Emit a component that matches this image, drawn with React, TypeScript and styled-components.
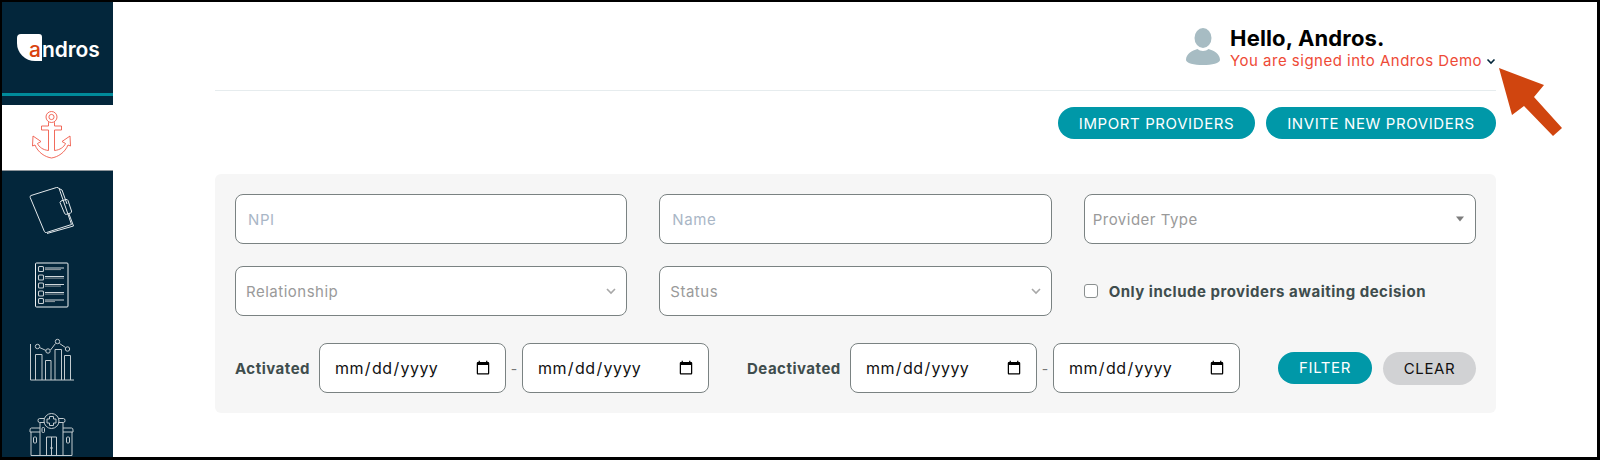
import React from "react";
import styled, { createGlobalStyle } from "styled-components";

const FONT = `Inter, "Noto Sans", "Liberation Sans", sans-serif`;

const GlobalStyle = createGlobalStyle`
  html, body {
    margin: 0;
    padding: 0;
    background: #fff;
    font-family: ${FONT};
  }
`;

// Black outline around the whole screenshot
const Frame = styled.div`
  position: relative;
  box-sizing: border-box;
  display: flex;
  width: 1600px;
  height: 460px;
  border: solid #000;
  border-width: 2px 3px 3px 2px;
  overflow: hidden;
  background: #fff;
`;

const Sidebar = styled.nav`
  display: flex;
  flex-direction: column;
  align-items: stretch;
  flex: 0 0 111px;
  background: #03263b;
  overflow: hidden;
`;

const LogoRow = styled.div`
  display: flex;
  align-items: flex-end;
  flex: none;
  height: 59px;
  padding: 0 0 0 15px;
`;

const LogoBadge = styled.div`
  box-sizing: border-box;
  width: 25px;
  height: 27px;
  padding-right: 1px;
  background: #fff;
  border-radius: 4px 3px 0 18px;
  color: #d9420f;
  font-size: 21px;
  font-weight: 500;
  line-height: 32px;
  text-align: right;
`;

const LogoText = styled.div`
  color: #fff;
  font-size: 21px;
  font-weight: 600;
  line-height: 32px;
  height: 27px;
  letter-spacing: -0.1px;
`;

const TealRule = styled.div`
  flex: none;
  height: 3px;
  margin-top: 32px;
  background: #008b9b;
`;

const NavItem = styled.div<{ $active?: boolean }>`
  display: flex;
  align-items: center;
  justify-content: center;
  flex: 0 0 ${({ $active }) => ($active ? "66px" : "75px")};
  margin-top: ${({ $active }) => ($active ? "9px" : "0")};
  padding: ${({ $active }) => ($active ? "0 11px 1px 0" : "7px 11px 0 0")};
  background: ${({ $active }) => ($active ? "#fff" : "transparent")};
  border-bottom: ${({ $active }) => ($active ? "1px solid #8d949a" : "none")};
  box-sizing: border-box;
`;

const NavIcon = styled.svg`
  display: block;
  width: 64px;
  height: 64px;
  flex: none;
  fill: none;
`;

const Main = styled.main`
  flex: 1;
  display: flex;
  flex-direction: column;
  padding: 0 101px 0 102px;
`;

const Header = styled.header`
  display: flex;
  justify-content: flex-end;
  align-items: flex-start;
  gap: 9px;
  height: 89px;
  padding-top: 24px;
  box-sizing: border-box;
  border-bottom: 1px solid #e6ecee;
`;

const Avatar = styled.svg`
  display: block;
  width: 36px;
  height: 38px;
  margin-top: 2px;
  flex: none;
`;

const Greeting = styled.div`
  display: flex;
  flex-direction: column;
`;

const Hello = styled.div`
  color: #000;
  font-size: 22px;
  font-weight: 700;
  line-height: 24px;
  letter-spacing: 0.15px;
`;

const SignedIn = styled.div`
  display: flex;
  align-items: center;
  gap: 4px;
  margin-top: 1px;
  color: #ee4a36;
  font-size: 15px;
  line-height: 20px;
  letter-spacing: 0.49px;
`;

const Actions = styled.div`
  display: flex;
  justify-content: flex-end;
  gap: 11px;
  margin-top: 16px;
`;

const Pill = styled.button<{ $grey?: boolean; $width: number }>`
  height: ${({ $grey }) => ($grey ? "33px" : "32px")};
  width: ${({ $width }) => $width}px;
  padding: 0;
  border: none;
  border-radius: 17px;
  background: ${({ $grey }) => ($grey ? "#d1d2d4" : "#0098a8")};
  color: ${({ $grey }) => ($grey ? "#111" : "#fff")};
  font-family: ${FONT};
  font-size: 15px;
  font-weight: 400;
  letter-spacing: 0.6px;
`;

const FilterPanel = styled.section`
  margin-top: 35px;
  padding: 20px;
  background: #f6f6f6;
  border-radius: 6px;
`;

const FieldGrid = styled.div`
  display: grid;
  grid-template-columns: repeat(3, 1fr);
  column-gap: 32px;
  row-gap: 22px;
  align-items: center;
`;

const TextField = styled.input`
  box-sizing: border-box;
  width: 100%;
  height: 50px;
  padding: 0 12px;
  background: #fff;
  border: 1px solid #7a8282;
  border-radius: 8px;
  outline: none;
  font-family: ${FONT};
  font-size: 15px;
  letter-spacing: 0.6px;

  &::placeholder {
    color: #a9b6c6;
    opacity: 1;
  }
`;

const SelectBox = styled.div`
  position: relative;
  height: 50px;
`;

const SelectField = styled.select<{ $inset: number }>`
  box-sizing: border-box;
  width: 100%;
  height: 100%;
  padding: 0 30px 0 ${({ $inset }) => $inset}px;
  appearance: none;
  background: #fff;
  border: 1px solid #7a8282;
  border-radius: 8px;
  outline: none;
  color: #9a9a9a;
  font-family: ${FONT};
  font-size: 15px;
  letter-spacing: 0.5px;
`;

const SelectMark = styled.svg`
  position: absolute;
  top: 50%;
  right: 10px;
  width: 12px;
  height: 8px;
  transform: translateY(-50%);
  pointer-events: none;
`;

const CheckRow = styled.label`
  display: flex;
  align-items: center;
  gap: 11px;
  color: #3f4d4d;
  font-size: 15px;
  font-weight: 700;
  letter-spacing: 0.5px;
`;

const CheckBox = styled.span`
  box-sizing: border-box;
  width: 14px;
  height: 14px;
  background: #fff;
  border: 1px solid #8a8f8f;
  border-radius: 3px;
`;

const DateRow = styled.div`
  display: flex;
  align-items: center;
  margin-top: 27px;
`;

const DateLabel = styled.label<{ $width: number; $gap?: number }>`
  flex: 0 0 ${({ $width }) => $width}px;
  margin-left: ${({ $gap }) => $gap ?? 0}px;
  color: #3f4d4d;
  font-size: 15px;
  font-weight: 700;
  letter-spacing: 0.5px;
`;

const DateField = styled.input`
  box-sizing: border-box;
  width: 187px;
  height: 50px;
  padding: 0 12px 0 14px;
  background: #fff;
  border: 1px solid #7a8282;
  border-radius: 8px;
  outline: none;
  color: #111;
  font-family: ${FONT};
  font-size: 16px;
  letter-spacing: 0.4px;
`;

const Dash = styled.span`
  flex: 0 0 16px;
  color: #777;
  font-size: 14px;
  text-align: center;
`;

const RowButtons = styled.div`
  display: flex;
  gap: 11px;
  margin-left: auto;
`;

// The red call-out arrow lies over the page
const Callout = styled.svg`
  position: absolute;
  left: 1495px;
  top: 64px;
  width: 70px;
  height: 74px;
  pointer-events: none;
`;

const AnchorIcon = () => (
  <NavIcon viewBox="0 0 64 64" stroke="#ef5a4a" strokeWidth="0.9">
    <circle cx="31.5" cy="12" r="5.5" />
    <circle cx="31.5" cy="12" r="2.6" />
    <path d="M28.5 17.2V21H21.5V25H28.5V45.5C23 45 19 42 17.5 38.5L21 36.5L13 31L12.5 41L15 40C18 47.5 25 52 31.5 53C38 52 45 47.5 48 40L50.5 41L50 31L42 36.5L45.5 38.5C44 42 40 45 34.5 45.5V25H41.5V21H34.5V17.2" />
  </NavIcon>
);

const NotebookIcon = () => (
  <NavIcon viewBox="0 0 64 64" stroke="#e4e9ec" strokeWidth="1">
    <path d="M11 15.5L36.5 7.5Q38.5 7 39.3 9L51.5 44.5L26.5 52.5Q25 53 24.3 51.3L10.2 17.5Q9.7 16 11 15.5Z" />
    <path d="M39 8.5L42 10L47 24M49 34L53.5 46L27 53.5" />
    <path d="M41 21L46 19.5Q47.5 19.2 48 20.5L51.5 31Q52 32.5 50.5 33L46.5 34.3Q45 34.7 44.5 33.2L40 22.5Z" />
  </NavIcon>
);

const ChecklistIcon = () => {
  const rows = [
    { y: 14, w: 16 },
    { y: 22.5, w: 19 },
    { y: 30.5, w: 16 },
    { y: 38.5, w: 19 },
    { y: 46, w: 10 },
  ];
  return (
    <NavIcon viewBox="0 0 64 64">
      <rect x="15.5" y="8" width="32.5" height="44" rx="1" stroke="#eef2f4" strokeWidth="1" />
      {rows.map((r) => (
        <g key={r.y}>
          <rect x="18.5" y={r.y - 2.5} width="5" height="5" rx="1" stroke="#c9d0d4" strokeWidth="1.1" />
          <path d={`M25 ${r.y - 1}H44`} stroke="#e8ecee" strokeWidth="0.9" />
          <path d={`M25 ${r.y + 0.6}H${25 + r.w}`} stroke="#8f9aa1" strokeWidth="1" />
        </g>
      ))}
    </NavIcon>
  );
};

const ChartIcon = () => (
  <NavIcon viewBox="0 0 64 64" stroke="#c3cbcf" strokeWidth="1">
    <path d="M10.5 14V50H54" />
    <path d="M15.5 50V24.5H22V50M25.5 50V30.5H31V50M35 50V19.5H41.5V50M44.5 50V25.5H50.5V50" />
    <path d="M19.5 17.5L26 20.5M30.5 20L35.5 13.5M39.5 13.5L45.5 17.5" />
    <circle cx="17.5" cy="16.5" r="2.2" />
    <circle cx="28" cy="21" r="2.2" />
    <circle cx="37.5" cy="11.5" r="2.2" />
    <circle cx="47.5" cy="19" r="2.2" />
  </NavIcon>
);

const HospitalIcon = () => (
  <NavIcon viewBox="0 0 64 64" stroke="#c3cbcf" strokeWidth="1">
    <g transform="translate(0 -1)">
      <circle cx="31.5" cy="17" r="7.5" />
      <path d="M29.5 12.5H33.5V15H36V19H33.5V21.5H29.5V19H27V15H29.5Z" />
      <path d="M24 14.5H19.5Q18 14.5 18 16.5Q18 18.5 19.5 18.5H24.3M39 14.5H43.5Q45 14.5 45 16.5Q45 18.5 43.5 18.5H38.7" />
      <path d="M20 18.5V51.5M43 18.5V51.5" />
      <path d="M20 24H11.5Q10 24 10 26V28H20M43 24H51.5Q53 24 53 26V28H43" />
      <path d="M11 28V51.5H52V28" />
      <path d="M26.5 51.5V33H36.5V51.5M31.5 33V51.5" />
      <rect x="13.5" y="33" width="3" height="6" rx="1" />
      <rect x="46.5" y="33" width="3" height="6" rx="1" />
      <rect x="22" y="23.5" width="2.5" height="5" rx="1" />
      <path d="M30 44H33" />
    </g>
  </NavIcon>
);

const Chevron = ({ color }: { color: string }) => (
  <SelectMark viewBox="0 0 12 8" fill="none" stroke={color} strokeWidth="1.6">
    <path d="M2 2L6 6L10 2" />
  </SelectMark>
);

const Caret = () => (
  <SelectMark viewBox="0 0 12 8" fill="#7d7d7d">
    <path d="M2 1.5H10L6 6.5Z" />
  </SelectMark>
);

export default function App() {
  return (
    <>
      <GlobalStyle />
      <Frame>
        <Sidebar>
          <LogoRow>
            <LogoBadge>a</LogoBadge>
            <LogoText>ndros</LogoText>
          </LogoRow>
          <TealRule />
          <NavItem $active>
            <AnchorIcon />
          </NavItem>
          <NavItem>
            <NotebookIcon />
          </NavItem>
          <NavItem>
            <ChecklistIcon />
          </NavItem>
          <NavItem>
            <ChartIcon />
          </NavItem>
          <NavItem>
            <HospitalIcon />
          </NavItem>
        </Sidebar>
        <Main>
          <Header>
            <Avatar viewBox="0 0 36 38" fill="#a7bcc3">
              <ellipse cx="18" cy="10" rx="8.5" ry="10" />
              <path d="M1 32C1 26 7 22.5 12.5 21C15 23.5 21 23.5 23.5 21C29 22.5 35 26 35 32C35 35 27 37 18 37C9 37 1 35 1 32Z" />
            </Avatar>
            <Greeting>
              <Hello>Hello, Andros.</Hello>
              <SignedIn>
                You are signed into Andros Demo
                <svg width="10" height="7" viewBox="0 0 10 7" fill="none" stroke="#03263b" strokeWidth="1.6">
                  <path d="M1.5 1.5L5 5L8.5 1.5" />
                </svg>
              </SignedIn>
            </Greeting>
          </Header>
          <Actions>
            <Pill $width={197}>IMPORT PROVIDERS</Pill>
            <Pill $width={230}>INVITE NEW PROVIDERS</Pill>
          </Actions>
          <FilterPanel>
            <FieldGrid>
              <TextField placeholder="NPI" />
              <TextField placeholder="Name" />
              <SelectBox>
                <SelectField $inset={8} defaultValue="">
                  <option value="">Provider Type</option>
                </SelectField>
                <Caret />
              </SelectBox>
              <SelectBox>
                <SelectField $inset={10} defaultValue="">
                  <option value="">Relationship</option>
                </SelectField>
                <Chevron color="#a8a8a8" />
              </SelectBox>
              <SelectBox>
                <SelectField $inset={10} defaultValue="">
                  <option value="">Status</option>
                </SelectField>
                <Chevron color="#a8a8a8" />
              </SelectBox>
              <CheckRow>
                <CheckBox />
                Only include providers awaiting decision
              </CheckRow>
            </FieldGrid>
            <DateRow>
              <DateLabel $width={84}>Activated</DateLabel>
              <DateField type="date" />
              <Dash>-</Dash>
              <DateField type="date" />
              <DateLabel $width={103} $gap={38}>
                Deactivated
              </DateLabel>
              <DateField type="date" />
              <Dash>-</Dash>
              <DateField type="date" />
              <RowButtons>
                <Pill $width={94}>FILTER</Pill>
                <Pill $grey $width={93}>
                  CLEAR
                </Pill>
              </RowButtons>
            </DateRow>
          </FilterPanel>
        </Main>
        <Callout viewBox="0 0 70 74" fill="#d0450f">
          <path d="M2 2L47 19L37 31L65 62L56 70L27 40L15 49Z" />
        </Callout>
      </Frame>
    </>
  );
}
